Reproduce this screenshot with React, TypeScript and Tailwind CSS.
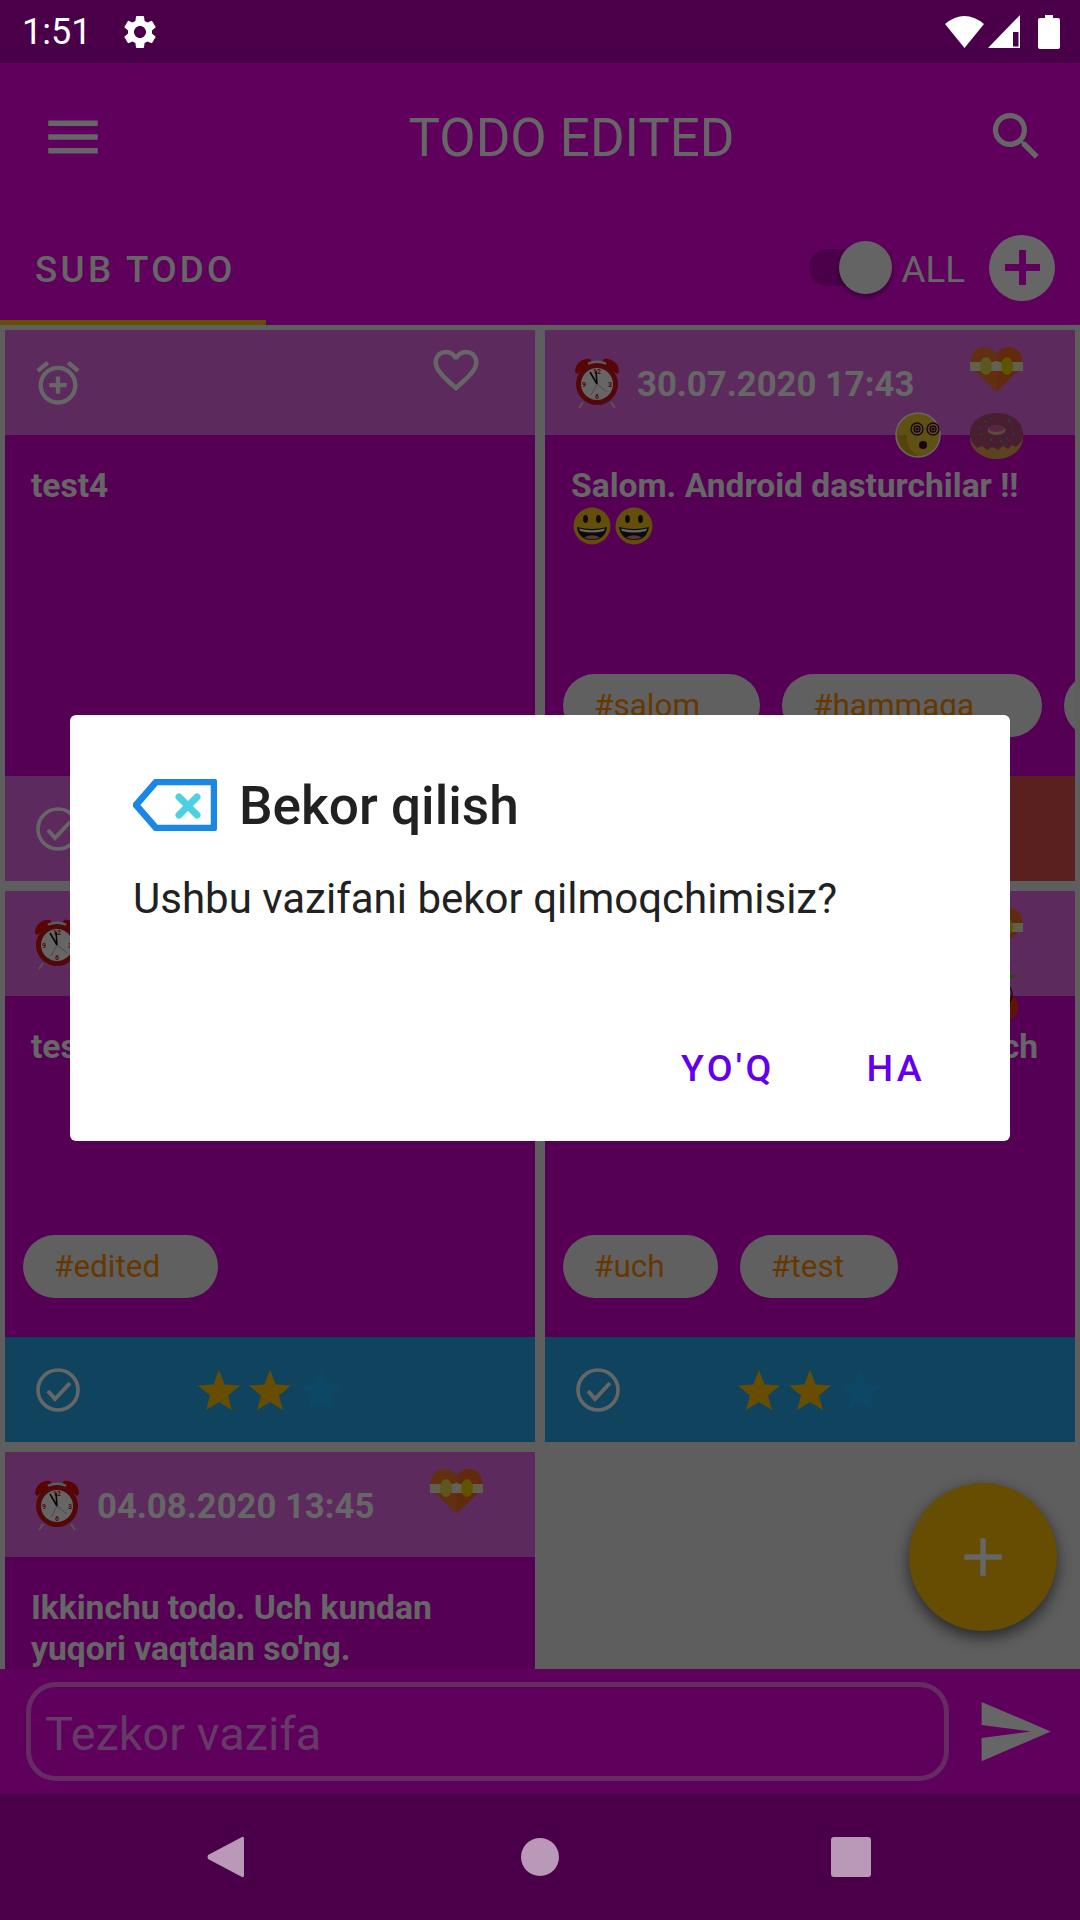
import { ReactNode } from 'react'
import { MdAdd, MdFavoriteBorder, MdMenu, MdOutlineAlarmAdd, MdSearch, MdSend, MdSettings } from 'react-icons/md'

function AlarmClock({ className }: { className?: string }) {
  return (
    <svg viewBox="0 0 46 52" className={className}>
      <path d="M1 15 C1 6 9 1 16 2 L18 5 L3 17 Z" fill="#e00808" />
      <path d="M45 15 C45 6 37 1 30 2 L28 5 L43 17 Z" fill="#e00808" />
      <path d="M9 45 L5 51" stroke="#d8d8d8" strokeWidth="2" />
      <path d="M37 45 L41 51" stroke="#d8d8d8" strokeWidth="2" />
      <path d="M14 7 Q23 3 32 7" stroke="#e8e8e8" strokeWidth="3" fill="none" />
      <circle cx="23" cy="27" r="21" fill="#cc1414" />
      <circle cx="23" cy="27" r="16" fill="#ffffff" />
      <text x="23" y="17" fontSize="7" textAnchor="middle" fill="#d01010" fontWeight="700">12</text>
      <text x="36" y="30" fontSize="7" textAnchor="middle" fill="#d01010" fontWeight="700">3</text>
      <text x="23" y="42" fontSize="7" textAnchor="middle" fill="#d01010" fontWeight="700">6</text>
      <text x="10" y="30" fontSize="7" textAnchor="middle" fill="#d01010" fontWeight="700">9</text>
      <path d="M23 27 L16 15 M23 27 L22 14" stroke="#111111" strokeWidth="1.6" />
      <path d="M23 27 L33 35 M23 27 L17 38" stroke="#999999" strokeWidth="0.7" />
    </svg>
  )
}

function GiftHeart({ className }: { className?: string }) {
  return (
    <svg viewBox="0 0 53 45" className={className}>
      <path d="M26.5 45 L3 22 C-3 13 3 0 14 0 C20 0 24 3 26.5 7 Z" fill="#f07828" />
      <path d="M26.5 45 L50 22 C56 13 50 0 39 0 C33 0 29 3 26.5 7 Z" fill="#f56a20" />
      <rect x="0" y="15" width="53" height="9" fill="#f2f0c0" />
      <ellipse cx="16" cy="19" rx="6" ry="9" fill="#e8d850" />
      <ellipse cx="37" cy="19" rx="6" ry="9" fill="#f0d000" />
      <circle cx="26.5" cy="19" r="5" fill="#f5f3d8" />
    </svg>
  )
}

function DizzyFace({ className }: { className?: string }) {
  return (
    <svg viewBox="0 0 46 46" className={className}>
      <circle cx="23" cy="23" r="22" fill="#f2c832" stroke="#ffffff" strokeWidth="1.5" />
      <path d="M3 23 A20 20 0 0 0 23 44 A22 22 0 0 1 12 23 Z" fill="#d8a820" />
      {[22, 38].map(cx => (
        <g key={cx} fill="none" stroke="#3a0a40" strokeWidth="1.4">
          <circle cx={cx} cy="17" r="6" />
          <circle cx={cx} cy="17" r="3" />
          <circle cx={cx} cy="17" r="0.8" />
        </g>
      ))}
      <circle cx="28" cy="33" r="4" fill="#3a0a40" />
    </svg>
  )
}

function Donut({ className }: { className?: string }) {
  return (
    <svg viewBox="0 0 53 46" className={className}>
      <ellipse cx="26.5" cy="25" rx="26.5" ry="21" fill="#e6a850" />
      <path d="M0 21 C0 8 12 0 26.5 0 C41 0 53 8 53 21 C53 28 50 31 46 34 L42 32 L38 36 L33 33 L28 37 L22 34 L17 37 L12 33 L7 35 C3 31 0 27 0 21 Z" fill="#b84c7a" />
      <ellipse cx="26.5" cy="17" rx="9" ry="5" fill="#e6c080" />
      <ellipse cx="26.5" cy="15.5" rx="8" ry="3.5" fill="#d400d4" opacity="0.5" />
      <path d="M14 8 l3 1 M38 6 l2 3 M44 20 l-1 3 M10 22 l3 -2 M30 28 l3 1 M22 26 l-2 2" stroke="#40c070" strokeWidth="1.4" />
      <path d="M20 5 l2 2 M8 14 l2 2 M42 13 l1 2 M36 25 l2 1" stroke="#30a0f0" strokeWidth="1.4" />
    </svg>
  )
}

function Smiley({ className }: { className?: string }) {
  return (
    <svg viewBox="0 0 38 38" className={className}>
      <circle cx="19" cy="19" r="18.5" fill="#f7c61c" />
      <ellipse cx="12.5" cy="12" rx="2.4" ry="4" fill="#1a1a1a" />
      <ellipse cx="25.5" cy="12" rx="2.4" ry="4" fill="#1a1a1a" />
      <path d="M4 20 Q19 24 34 20 Q32 33 19 33 Q6 33 4 20 Z" fill="#1a1a1a" />
      <path d="M6 21.5 Q19 25 32 21.5 L31 24 Q19 27 7 24 Z" fill="#ffffff" />
      <path d="M11 30.5 Q19 26 27 30.5 Q19 34 11 30.5 Z" fill="#f08080" />
    </svg>
  )
}

function Cherry({ className }: { className?: string }) {
  return (
    <svg viewBox="0 0 52 48" className={className}>
      <path d="M30 3 Q46 0 49 3 Q40 9 30 3 Z" fill="#58c020" />
      <circle cx="37" cy="34" r="13.5" fill="#f03010" />
      <path d="M30 3 C44 12 47 20 42 29" fill="none" stroke="#101010" strokeWidth="1.2" />
    </svg>
  )
}

function CheckCircle({ className }: { className?: string }) {
  return (
    <svg viewBox="0 0 44 44" className={className} fill="none" stroke="#ffffff" strokeWidth="3.6">
      <circle cx="22" cy="22" r="20" />
      <path d="M12 23 L19 31 L34 15" strokeWidth="4" />
    </svg>
  )
}

function Star({ filled }: { filled: boolean }) {
  return (
    <svg viewBox="0 0 42 40" className="h-[40px] w-[42px]">
      <path d="M21 0 L26.6 14.6 L42 15.5 L30 25.4 L33.9 40 L21 32 L8.1 40 L12 25.4 L0 15.5 L15.4 14.6 Z" fill={filled ? '#ffc107' : '#20b4ff'} />
    </svg>
  )
}

function Tag({ label, width }: { label?: string; width: string }) {
  return (
    <div className={`flex h-[63px] shrink-0 items-center rounded-[32px] bg-[#f0f0f0] pl-[31px] text-[31.5px] text-[#ff8c00] ${width}`}>
      {label}
    </div>
  )
}

interface CardProps {
  date?: string
  text: ReactNode
  tags?: ReactNode
  footer: string
  stars?: boolean
  badges?: ReactNode
}

function Card({ date, text, tags, footer, stars, badges }: CardProps) {
  return (
    <div className="relative flex h-[551px] flex-col bg-[#d400d4]">
      <div className="flex h-[105px] shrink-0 items-center bg-[#e669e6] pl-[29px]">
        {date ? (
          <>
            <AlarmClock className="h-[52px] w-[46px] shrink-0" />
            <span className="ml-[17px] pt-[3px] text-[34.7px] font-bold text-white">{date}</span>
          </>
        ) : (
          <MdOutlineAlarmAdd className="-ml-[2px] text-white" size={52} />
        )}
      </div>
      {badges}
      <div className="flex-1 overflow-hidden px-[26px] pt-[30px] text-[33.6px] leading-[41px] font-bold text-white">{text}</div>
      <div className="flex h-[63px] gap-[22px] overflow-hidden pl-[18px]">{tags}</div>
      <div className="h-[39px] shrink-0" />
      <div className={`flex h-[105px] shrink-0 items-center pl-[31px] ${footer}`}>
        <CheckCircle className="h-[44px] w-[44px]" />
        {stars && (
          <div className="ml-[118px] flex gap-[9px]">
            <Star filled />
            <Star filled />
            <Star filled={false} />
          </div>
        )}
      </div>
    </div>
  )
}

export default function App() {
  return (
    <div className="relative flex h-[1920px] w-[1080px] flex-col overflow-hidden bg-[#ebebeb] font-['Roboto',sans-serif]">
      {/* status bar */}
      <div className="relative z-20 flex h-[63px] shrink-0 items-center bg-[#4a0049] pl-[22px] pr-[20px] text-white">
        <span className="text-[36px]">1:51</span>
        <MdSettings className="ml-[29px]" size={40} />
        <div className="ml-auto flex items-center gap-[4px]">
          <svg viewBox="0 0 39 32" className="h-[32px] w-[39px]">
            <path d="M0 8 Q19.5 -8 39 8 L19.5 32 Z" fill="#ffffff" />
          </svg>
          <svg viewBox="0 0 32 33" className="h-[33px] w-[32px]">
            <path d="M32 0 V33 H0 Z" fill="#ffffff" />
            <path d="M25 17 H30.5 V31.5 H25 Z" fill="#4a0049" />
          </svg>
          <svg viewBox="0 0 22 34" className="ml-[14px] h-[34px] w-[22px]">
            <path d="M7 0 H15 V3 H20 Q22 3 22 5 V32 Q22 34 20 34 H2 Q0 34 0 32 V5 Q0 3 2 3 H7 Z" fill="#ffffff" />
          </svg>
        </div>
      </div>

      {/* app bar */}
      <div className="flex h-[147px] shrink-0 items-center bg-[#eb00e6] pl-[40px] pr-[32px] text-white">
        <MdMenu size={66} />
        <div className="flex-1 pl-[52px] pt-[4px] text-center text-[52.9px] leading-none">TODO EDITED</div>
        <MdSearch size={63} />
      </div>

      {/* tabs */}
      <div className="relative flex h-[115px] shrink-0 items-center bg-[#eb00e6] pl-[35px] pr-[25px] text-white">
        <span className="pt-[4px] text-[36.75px] font-medium tracking-[3.3px]">SUB TODO</span>
        <div className="ml-auto flex items-center">
          <div className="relative h-[37px] w-[69px] rounded-full bg-[#b800b4]">
            <div className="absolute left-[30px] top-[-8px] h-[53px] w-[53px] rounded-full bg-[#fafafa] shadow-[0_3px_5px_rgba(0,0,0,0.4)]" />
          </div>
          <span className="ml-[23px] pt-[4px] text-[36.75px]">ALL</span>
          <div className="ml-[24px] flex h-[66px] w-[66px] items-center justify-center rounded-full bg-white">
            <svg viewBox="0 0 35 35" className="h-[35px] w-[35px]">
              <path d="M14 0 H21 V14 H35 V21 H21 V35 H14 V21 H0 V14 H14 Z" fill="#eb00e6" />
            </svg>
          </div>
        </div>
        <div className="absolute bottom-0 left-0 h-[5px] w-[266px] bg-[#ffc107]" />
      </div>

      {/* todo list */}
      <div className="relative flex-1 overflow-hidden">
        <div className="grid grid-cols-2 gap-[10px] p-[5px]">
          <Card
            text="test4"
            footer="bg-[#e669e6]"
            badges={<MdFavoriteBorder className="absolute left-[424px] top-[13px] text-white" size={54} />}
          />
          <Card
            date="30.07.2020 17:43"
            text={
              <>
                <div>Salom. Android dasturchilar !!</div>
                <div className="flex gap-[4px] pl-[2px] pt-[1px]">
                  <Smiley className="h-[38px] w-[38px]" />
                  <Smiley className="h-[38px] w-[38px]" />
                </div>
              </>
            }
            tags={
              <>
                <Tag label="#salom" width="w-[197px]" />
                <Tag label="#hammaga" width="w-[260px]" />
                <Tag width="w-[100px]" />
              </>
            }
            footer="bg-[#e15050]"
            badges={
              <>
                <GiftHeart className="absolute left-[425px] top-[17px] h-[45px] w-[53px]" />
                <DizzyFace className="absolute left-[350px] top-[82px] h-[46px] w-[46px]" />
                <Donut className="absolute left-[425px] top-[83px] h-[46px] w-[53px]" />
              </>
            }
          />
          <Card
            date="29.07.2020 12:00"
            text="test"
            tags={<Tag label="#edited" width="w-[195px]" />}
            footer="bg-[#28aaeb]"
            stars
          />
          <Card
            date="30.07.2020 10:30"
            text={<div className="pl-[412px]">uch</div>}
            tags={
              <>
                <Tag label="#uch" width="w-[155px]" />
                <Tag label="#test" width="w-[158px]" />
              </>
            }
            footer="bg-[#28aaeb]"
            stars
            badges={
              <>
                <GiftHeart className="absolute left-[425px] top-[17px] h-[45px] w-[53px]" />
                <Cherry className="absolute left-[423px] top-[82px] h-[48px] w-[52px]" />
              </>
            }
          />
          <Card
            date="04.08.2020 13:45"
            text="Ikkinchu todo. Uch kundan yuqori vaqtdan so'ng."
            footer="bg-[#e669e6]"
            badges={<GiftHeart className="absolute left-[425px] top-[17px] h-[45px] w-[53px]" />}
          />
        </div>
        <div className="absolute left-[909px] top-[1158px] flex h-[148px] w-[148px] items-center justify-center rounded-full bg-[#ffc107] text-white shadow-[0_6px_16px_rgba(0,0,0,0.6)]">
          <MdAdd size={64} />
        </div>
      </div>

      {/* quick add */}
      <div className="flex h-[125px] shrink-0 items-center bg-[#eb00e6] pl-[26px]">
        <div className="flex h-[99px] w-[923px] items-center rounded-[30px] border-[5px] border-[#fc6bf7] pl-[14px] pt-[5px] text-[46.9px] text-[#ff92ff]">
          Tezkor vazifa
        </div>
        <MdSend className="ml-[26px] text-white" size={79} />
      </div>

      {/* nav bar */}
      <div className="relative z-20 flex h-[126px] shrink-0 items-center bg-[#4a0049]">
        <svg viewBox="0 0 37 42" className="ml-[207px] h-[42px] w-[37px]">
          <path d="M35 1 Q37 0 37 3 V39 Q37 42 35 41 L1 23 Q0 21 1 19 Z" fill="#b998b8" />
        </svg>
        <div className="ml-[277px] h-[38px] w-[38px] rounded-full bg-[#b998b8]" />
        <div className="ml-[272px] h-[40px] w-[40px] rounded-[3px] bg-[#b998b8]" />
      </div>

      {/* dialog scrim */}
      <div className="absolute inset-0 z-10 bg-black/60" />
      <div className="absolute left-[70px] top-[715px] z-30 flex h-[426px] w-[940px] flex-col rounded-[6px] bg-white pl-[63px] text-[#212121]">
        <div className="mt-[62px] flex items-center">
          <svg viewBox="0 0 84 52" className="h-[52px] w-[84px]">
            <path d="M23 3 H81 V49 H23 L3 26 Z" fill="none" stroke="#1a86e5" strokeWidth="6.5" strokeLinejoin="round" />
            <path d="M46 18 L64 36 M64 18 L46 36" stroke="#4dd0e1" strokeWidth="7" strokeLinecap="round" />
          </svg>
          <span className="ml-[22px] pt-[3px] text-[53.2px] font-medium leading-none">Bekor qilish</span>
        </div>
        <p className="mt-[38px] text-[42px] leading-[56px]">Ushbu vazifani bekor qilmoqchimisiz?</p>
        <div className="mt-auto mb-[54px] flex justify-end gap-[92px] pr-[85px] text-[37.5px] font-medium leading-none tracking-[3.3px] text-[#6200ee]">
          <span>YO'Q</span>
          <span>HA</span>
        </div>
      </div>
    </div>
  )
}
